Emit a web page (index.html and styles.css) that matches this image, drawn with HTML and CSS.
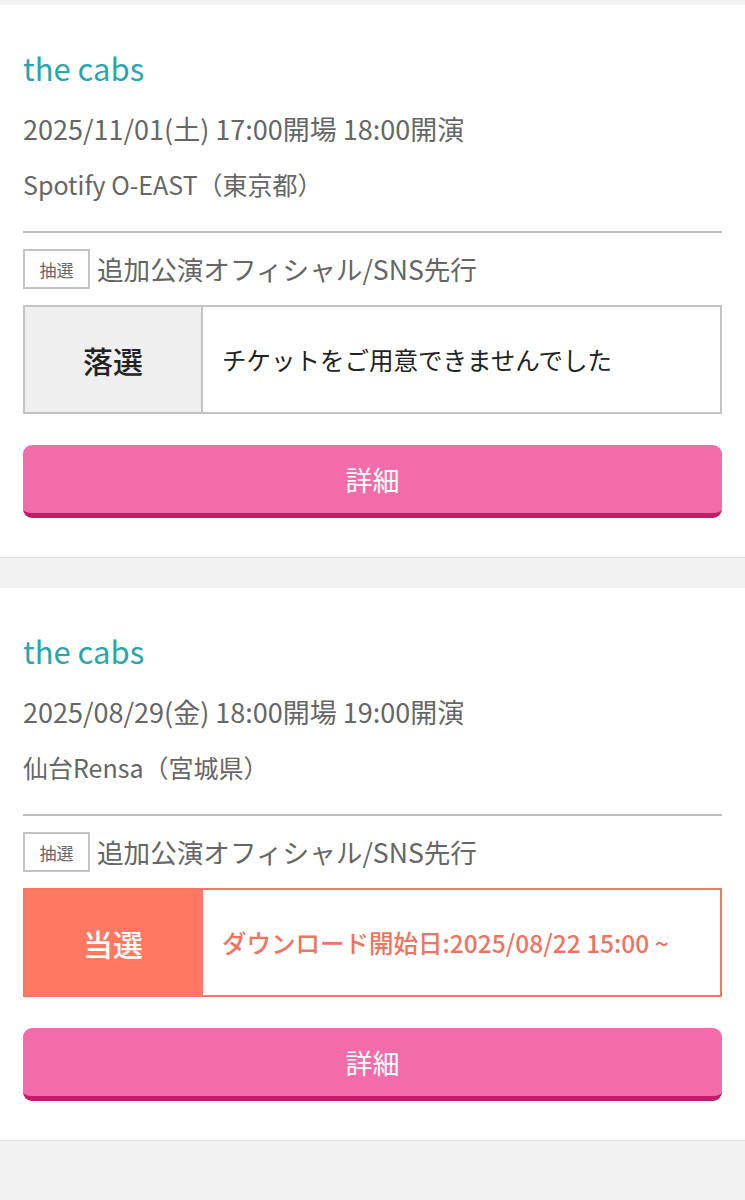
FILE: index.html
```html
<!DOCTYPE html>
<html lang="ja">
<head>
    <meta charset="UTF-8">
    <meta name="viewport" content="width=device-width, initial-scale=1.0">
    <title>申込履歴</title>
    <link rel="stylesheet" href="styles.css">
</head>
<body>
    <div class="ticket-list">
        <div class="ticket-card">
            <div class="artist-name">the cabs</div>
            <div class="event-date">2025/11/01(土) 17:00開場 18:00開演</div>
            <div class="event-venue">Spotify O-EAST（東京都）</div>
            <div class="sale-row">
                <span class="sale-type">抽選</span>
                <span class="sale-name">追加公演オフィシャル/SNS先行</span>
            </div>
            <div class="result-box lost">
                <div class="result-label">落選</div>
                <div class="result-text">チケットをご用意できませんでした</div>
            </div>
            <button class="detail-button">詳細</button>
        </div>

        <div class="ticket-card">
            <div class="artist-name">the cabs</div>
            <div class="event-date">2025/08/29(金) 18:00開場 19:00開演</div>
            <div class="event-venue">仙台Rensa（宮城県）</div>
            <div class="sale-row">
                <span class="sale-type">抽選</span>
                <span class="sale-name">追加公演オフィシャル/SNS先行</span>
            </div>
            <div class="result-box won">
                <div class="result-label">当選</div>
                <div class="result-text">ダウンロード開始日:2025/08/22 15:00 ~</div>
            </div>
            <button class="detail-button">詳細</button>
        </div>
    </div>
</body>
</html>
```

FILE: styles.css
```css
body {
    font-family: "Noto Sans CJK JP", "Noto Sans", sans-serif;
    margin: 0;
    padding: 5px 0 0;
    background-color: #f2f2f2;
    color: #666;
}
.ticket-list {
    display: flex;
    flex-direction: column;
    gap: 30px;
}
.ticket-card {
    background: #fff;
    padding: 43px 23px 39px;
    border-bottom: 1px solid #e2e2e2;
}
.artist-name {
    font-size: 31px;
    line-height: 40px;
    color: #2aa5ac;
}
.event-date {
    margin-top: 23px;
    font-size: 27px;
    line-height: 36px;
}
.event-venue {
    margin-top: 20px;
    font-size: 25px;
    line-height: 34px;
    padding-bottom: 30px;
    border-bottom: 2px solid #bdbdbd;
}
.sale-row {
    margin-top: 16px;
    display: flex;
    align-items: center;
    gap: 7px;
}
.sale-type {
    box-sizing: border-box;
    width: 67px;
    height: 40px;
    border: 2px solid #c4c4c4;
    font-size: 17px;
    display: flex;
    align-items: center;
    justify-content: center;
}
.sale-name {
    font-size: 26.6px;
    line-height: 40px;
}
.result-box {
    margin-top: 16px;
    display: flex;
    height: 109px;
    box-sizing: border-box;
    border: 2px solid #c4c4c4;
}
.result-label {
    width: 176px;
    flex-shrink: 0;
    display: flex;
    align-items: center;
    justify-content: center;
    font-size: 30px;
    font-weight: 500;
    color: #222;
    background: #efefef;
    border-right: 2px solid #c4c4c4;
}
.result-text {
    display: flex;
    align-items: center;
    padding-left: 19px;
    font-size: 24.5px;
    color: #222;
}
.result-box.won {
    border-color: #f27863;
}
.result-box.won .result-label {
    background: #ff7862;
    border-right-color: #ff7862;
    color: #fff;
}
.result-box.won .result-text {
    color: #f07360;
    font-weight: 500;
}
.detail-button {
    display: block;
    width: 100%;
    margin-top: 31px;
    height: 73px;
    border: none;
    border-bottom: 5px solid #c41a67;
    border-radius: 9px;
    background: #f16ca9;
    color: #fff;
    font-family: inherit;
    font-size: 27px;
    cursor: pointer;
}
```
